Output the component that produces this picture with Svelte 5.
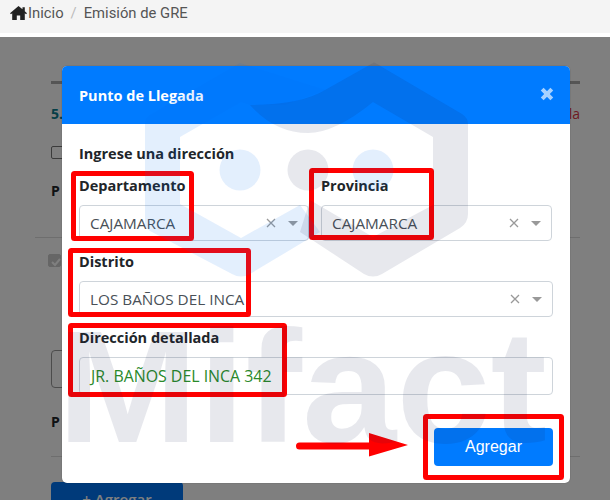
<script>
  const row1 = [
    { label: 'Departamento', value: 'CAJAMARCA' },
    { label: 'Provincia', value: 'CAJAMARCA' }
  ];
</script>

{#snippet select(label, value)}
  <div class="field">
    <span class="label">{label}</span>
    <div class="select">
      <span class="select-value">{value}</span>
      <svg class="clear" width="10" height="10" viewBox="0 0 10 10"><path d="M1 1l8 8M9 1l-8 8" /></svg>
      <span class="caret"></span>
    </div>
  </div>
{/snippet}

<div class="page">
  <nav class="topbar">
    <svg class="home" width="17" height="14" viewBox="0 0 17 14">
      <path d="M8.5 0L0 7.2l1 1.1 1.2-1V14h4.6V9.5h3.4V14h4.6V7.3l1.2 1 1-1.1-2.2-1.9V1.2h-2.3v2.1z" />
    </svg>
    <span class="crumb">Inicio</span>
    <span class="sep">/</span>
    <span class="crumb">Emisión de GRE</span>
  </nav>

  <main class="content">
    <div class="rule"></div>
    <div class="step"><span class="step-no">5.</span><span class="step-end">la</span></div>
    <div class="check"></div>
    <div class="sub">P</div>
    <div class="thin wide"></div>
    <div class="check checked">
      <svg width="14" height="14" viewBox="0 0 14 14"><path d="M3 7l3 3 5-6" /></svg>
    </div>
    <div class="box"></div>
    <div class="sub second">P</div>
    <div class="thin"></div>
    <div class="add">+ Agregar</div>

    <div class="backdrop"></div>
  </main>

  <section class="modal">
    <header class="modal-head">
      <h2>Punto de Llegada</h2>
      <svg class="close" width="14" height="14" viewBox="0 0 14 14"><path d="M2.2 2.2l9.6 9.6M11.8 2.2l-9.6 9.6" /></svg>
    </header>
    <div class="modal-body">
      <div class="title">Ingrese una dirección</div>
      <div class="cols">
        {#each row1 as f}
          {@render select(f.label, f.value)}
        {/each}
      </div>
      {@render select('Distrito', 'LOS BAÑOS DEL INCA')}
      <div class="field">
        <span class="label">Dirección detallada</span>
        <div class="input">JR. BAÑOS DEL INCA 342</div>
      </div>
      <div class="actions">
        <button type="button">Agregar</button>
      </div>
    </div>
  </section>

  <svg class="overlay" width="610" height="500" viewBox="0 0 610 500">
    <g fill="none" stroke="#f00" stroke-width="5" stroke-linejoin="round">
      <rect x="73.500" y="173.500" width="118" height="65" rx="1" />
      <rect x="311.500" y="170.500" width="120" height="67" rx="1" />
      <rect x="70.500" y="250.500" width="178" height="64" rx="1" />
      <rect x="70.500" y="325.500" width="214" height="69" rx="1" />
      <rect x="425.500" y="416.500" width="136" height="61" rx="1" />
    </g>
    <path d="M299.500 442.500H369V433L408 445 369 456.500V449.500H299.500a3.500 3.500 0 0 1 0-7z" fill="#f00" />

    <!-- watermark -->
    <path
      class="wm-blue"
      d="M240 63L150 115Q145 118 145 124V222Q145 228 150 231L232 274Q241 279 250 274L320 232 300 205 241 238 180 204V137L241 102 250 105 285 105 325 90 240 63z"
    />
    <path
      class="wm-gray"
      d="M373 63L325 90Q300 105 250 105 275 133 308 133 335 133 373 102L433 137V205L373 237 310 200 300 232 364 274Q373 279 382 274L460 228Q468 223 468 214V124Q468 118 462 114L382 67Q373 61 373 63z"
    />
    <circle class="wm-blue" cx="240" cy="170" r="20.500" />
    <circle class="wm-gray" cx="308" cy="170" r="20.500" />
    <circle class="wm-blue" cx="373" cy="170" r="20.500" />
    <text class="wm-text" x="57" y="442" font-size="160" textLength="490" lengthAdjust="spacingAndGlyphs">Mifact</text>
  </svg>
</div>

<style>
  :global(body) {
    margin: 0;
  }

  .page {
    position: relative;
    width: 610px;
    height: 500px;
    overflow: hidden;
    background: #fff;
    font-family: "Open Sans", "Liberation Sans", sans-serif;
    font-size: 14px;
    color: #212529;
  }

  .topbar {
    display: flex;
    align-items: center;
    height: 33px;
    padding: 0 0 7px 10px;
    box-sizing: border-box;
    background: #f4f4f4;
    font-family: Roboto, "Liberation Sans", sans-serif;
    font-size: 14.800px;
    color: #555;
  }

  .home {
    fill: #222;
    margin-right: 1px;
  }

  .sep {
    margin: 0 7px;
    color: #bbb;
  }

  .content {
    position: relative;
    margin-top: 4px;
    height: 463px;
    padding: 44px 30px 0 51px;
    box-sizing: border-box;
    background: #fff;
  }

  .backdrop {
    position: absolute;
    inset: 0;
    background: rgba(0, 0, 0, 0.5);
  }

  .rule {
    height: 3px;
    background: #aaa;
  }

  .step {
    display: flex;
    justify-content: space-between;
    margin-top: 20px;
    line-height: 20px;
  }

  .step-no {
    color: #0b7f8f;
    font-weight: 700;
  }

  .step-end {
    color: #dc3545;
  }

  .check {
    width: 11px;
    height: 11px;
    margin-top: 22px;
    border: 1px solid #777;
    border-radius: 2px;
    background: #fff;
  }

  .sub {
    margin-top: 22px;
    font-weight: 700;
    line-height: 20px;
  }

  .thin {
    height: 1px;
    margin-top: 24px;
    background: #ddd;
  }

  .wide {
    margin-left: -16px;
    margin-top: 36px;
  }

  .checked {
    margin-top: 16px;
    margin-left: -3px;
    border-color: #ccc;
    background: #ccc;
  }

  .checked svg {
    display: block;
    fill: none;
    stroke: #fff;
    stroke-width: 2;
  }

  .box {
    width: 100px;
    height: 36px;
    margin-top: 83px;
    border: 1px solid #999;
    border-radius: 4px;
  }

  .second {
    margin-top: 24px;
  }

  .add {
    width: 132px;
    height: 40px;
    margin-top: 25px;
    border-radius: 4px;
    background: #0075f5;
    color: #fff;
    font-size: 15px;
    font-weight: 600;
    text-align: center;
    line-height: 35px;
  }

  .modal {
    position: absolute;
    left: 62px;
    top: 66px;
    width: 508px;
    border-radius: 5px;
    overflow: hidden;
    background: #fff;
    box-shadow: 0 0 1px rgba(0, 0, 0, 0.5);
  }

  .modal-head {
    display: flex;
    align-items: center;
    justify-content: space-between;
    height: 58px;
    padding: 0 17px;
    background: #007bff;
    color: #fff;
  }

  h2 {
    margin: 0;
    font-size: 14.500px;
    font-weight: 700;
    line-height: 20px;
    padding-top: 2px;
  }

  .close {
    fill: none;
    stroke: #a6d1ff;
    stroke-width: 4;
    margin-top: -2px;
    margin-right: -1px;
  }

  .modal-body {
    display: grid;
    gap: 11px;
    padding: 20px 17px 17px;
  }

  .title,
  .label {
    font-weight: 700;
    font-size: 14.500px;
    line-height: 20px;
    color: #212529;
  }

  .title {
    margin-bottom: 1px;
  }

  .cols {
    display: grid;
    grid-template-columns: 230px 231px;
    gap: 12px;
  }

  .field {
    display: grid;
    gap: 9px;
  }

  .select,
  .input {
    display: flex;
    align-items: center;
    box-sizing: border-box;
    border: 1px solid #ced4da;
    border-radius: 4px;
    background: transparent;
    padding-left: 10px;
    font-size: 15.300px;
    white-space: nowrap;
  }

  .select {
    height: 36px;
    color: #495057;
  }

  .select-value {
    flex: 1;
  }

  .clear {
    fill: none;
    stroke: #999;
    stroke-width: 1.300;
    margin-right: 12px;
  }

  .caret {
    width: 0;
    height: 0;
    margin-right: 10px;
    border-left: 5px solid transparent;
    border-right: 5px solid transparent;
    border-top: 5px solid #999;
  }

  .input {
    height: 38px;
    padding-left: 11px;
    font-size: 15.900px;
    color: #2a8a2a;
  }

  .actions {
    display: flex;
    justify-content: flex-end;
    margin-top: 22px;
  }

  button {
    width: 119px;
    height: 38px;
    border: 0;
    border-radius: 4px;
    background: #007bff;
    color: #fff;
    font-family: "Liberation Sans", Arial, sans-serif;
    font-size: 16px;
  }

  .overlay {
    position: absolute;
    inset: 0;
    pointer-events: none;
  }

  .wm-blue {
    fill: rgba(0, 110, 240, 0.11);
  }

  .wm-gray {
    fill: rgba(20, 30, 80, 0.1);
  }

  .wm-text {
    fill: rgba(20, 30, 80, 0.1);
    font-family: "Liberation Sans", Arial, sans-serif;
    font-weight: 700;
  }
</style>
